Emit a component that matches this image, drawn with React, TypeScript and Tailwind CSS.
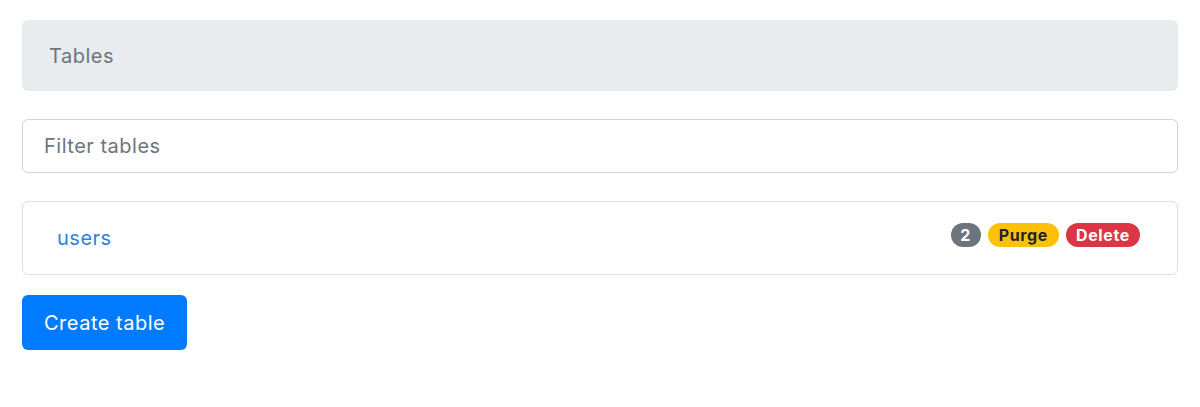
export default function App() {
  return (
    <div
      className="min-h-screen bg-white px-[22px] pt-[20px] text-[20px] tracking-[0.025em] text-[#212529]"
      style={{ fontFamily: 'Inter, "Noto Sans", sans-serif' }}
    >
      {/* breadcrumb */}
      <nav className="flex h-[71px] items-center rounded-[6px] bg-[#e9ecef] px-[27px]">
        <span className="text-[#6c757d]">Tables</span>
      </nav>

      <input
        type="text"
        placeholder="Filter tables"
        className="mt-[28px] block h-[54px] w-full rounded-[6px] border border-[#ced4da] px-[21px] text-[20px] tracking-[0.025em] outline-none placeholder:text-[#6c757d]"
      />

      <ul className="mt-[28px] rounded-[6px] border border-[#dfdfdf]">
        <li className="flex h-[72px] items-center justify-between pl-[34px] pr-[37px]">
          <a href="#" className="text-[#2f7fdc]">
            users
          </a>
          <div className="-mt-[7px] flex items-center gap-[7px] text-[16px] font-bold leading-none tracking-[0.04em]">
            <span className="flex h-[24px] w-[30px] items-center justify-center rounded-full bg-[#6c757d] text-white">
              2
            </span>
            <span className="flex h-[24px] items-center rounded-full bg-[#ffc107] px-[11px] text-[#212529]">
              Purge
            </span>
            <span className="flex h-[24px] items-center rounded-full bg-[#dc3545] px-[10px] text-white">
              Delete
            </span>
          </div>
        </li>
      </ul>

      <button
        type="button"
        className="mt-[20px] h-[55px] rounded-[6px] bg-[#007bff] px-[22px] text-[20px] tracking-[0.025em] text-white"
      >
        Create table
      </button>
    </div>
  );
}
